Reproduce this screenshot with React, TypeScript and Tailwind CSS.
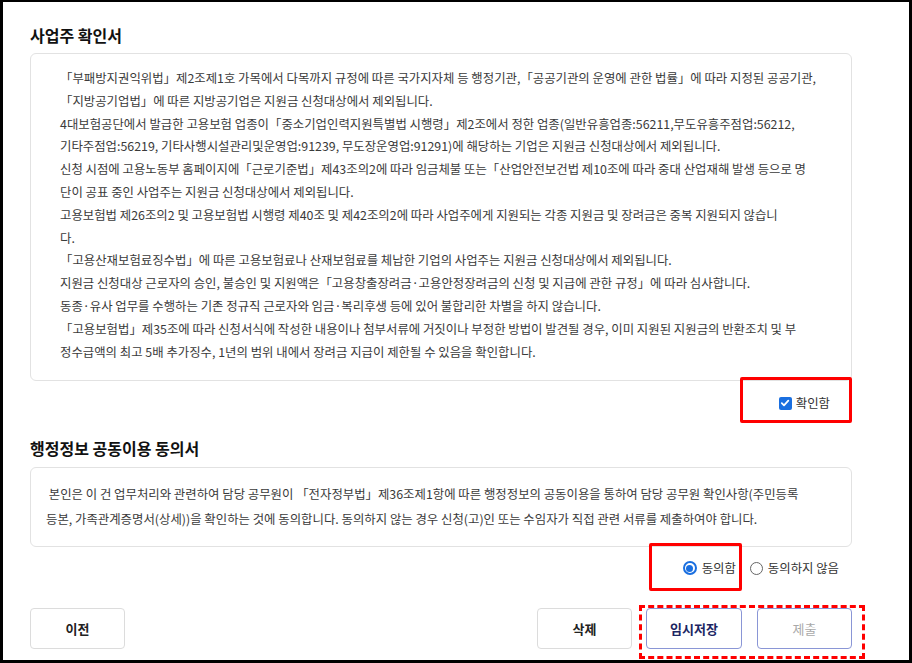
import React from "react";

const box1Lines = [
  "「부패방지권익위법」제2조제1호 가목에서 다목까지 규정에 따른 국가지자체 등 행정기관,「공공기관의 운영에 관한 법률」에 따라 지정된 공공기관,",
  "「지방공기업법」에 따른 지방공기업은 지원금 신청대상에서 제외됩니다.",
  "4대보험공단에서 발급한 고용보험 업종이「중소기업인력지원특별법 시행령」제2조에서 정한 업종(일반유흥업종:56211,무도유흥주점업:56212,",
  "기타주점업:56219, 기타사행시설관리및운영업:91239, 무도장운영업:91291)에 해당하는 기업은 지원금 신청대상에서 제외됩니다.",
  "신청 시점에 고용노동부 홈페이지에「근로기준법」제43조의2에 따라 임금체불 또는「산업안전보건법 제10조에 따라 중대 산업재해 발생 등으로 명",
  "단이 공표 중인 사업주는 지원금 신청대상에서 제외됩니다.",
  "고용보험법 제26조의2 및 고용보험법 시행령 제40조 및 제42조의2에 따라 사업주에게 지원되는 각종 지원금 및 장려금은 중복 지원되지 않습니",
  "다.",
  "「고용산재보험료징수법」에 따른 고용보험료나 산재보험료를 체납한 기업의 사업주는 지원금 신청대상에서 제외됩니다.",
  "지원금 신청대상 근로자의 승인, 불승인 및 지원액은「고용창출장려금·고용안정장려금의 신청 및 지급에 관한 규정」에 따라 심사합니다.",
  "동종·유사 업무를 수행하는 기존 정규직 근로자와 임금·복리후생 등에 있어 불합리한 차별을 하지 않습니다.",
  "「고용보험법」제35조에 따라 신청서식에 작성한 내용이나 첨부서류에 거짓이나 부정한 방법이 발견될 경우, 이미 지원된 지원금의 반환조치 및 부",
  "정수급액의 최고 5배 추가징수, 1년의 범위 내에서 장려금 지급이 제한될 수 있음을 확인합니다.",
];

const font = { fontFamily: '"Noto Sans CJK KR", "Noto Sans", sans-serif' };

export default function App() {
  return (
    <div
      className="relative w-[912px] h-[663px] box-border border-solid border-black border-t-2 border-l-[3px] border-r-[3px] border-b-[3px] bg-white overflow-hidden text-[#333]"
      style={font}
    >
      <div className="pl-[27px] w-[849px] flex flex-col">
        <h2 className="mt-[23px] text-[16px] leading-[21px] font-bold text-[#111]">사업주 확인서</h2>
        <div className="mt-[7px] h-[328px] border border-[#e2e2e2] rounded-[6px] pl-[29px] pt-[13px]">
          {box1Lines.map((l, i) => (
            <div key={i} className="whitespace-nowrap text-[12.4px] leading-[22.8px] text-[#3a3a3a]">
              {l}
            </div>
          ))}
        </div>
        <div className="h-[44px] flex items-center justify-end pr-[22px]">
          <span className="w-[13px] h-[13px] rounded-[2px] bg-[#1a6fe0] flex items-center justify-center">
            <svg width="10" height="10" viewBox="0 0 10 10">
              <path d="M1.8 5.2 L4 7.3 L8.3 2.6" stroke="white" strokeWidth="1.8" fill="none" strokeLinecap="round" strokeLinejoin="round" />
            </svg>
          </span>
          <span className="ml-[4px] text-[12.4px] text-[#333]">확인함</span>
        </div>
        <h2 className="mt-[13px] text-[16px] leading-[21px] font-bold text-[#111]">행정정보 공동이용 동의서</h2>
        <div className="mt-[8px] h-[80px] border border-[#e2e2e2] rounded-[6px] pl-[15px] pt-[14px]">
          <div className="whitespace-nowrap text-[12.4px] leading-[24.5px] text-[#3a3a3a]">
            {"\u00a0본인은 이 건 업무처리와 관련하여 담당 공무원이 「전자정부법」제36조제1항에 따른 행정정보의 공동이용을 통하여 담당 공무원 확인사항(주민등록"}
          </div>
          <div className="whitespace-nowrap text-[12.4px] leading-[24.5px] text-[#3a3a3a]">
            등본, 가족관계증명서(상세))을 확인하는 것에 동의합니다. 동의하지 않는 경우 신청(고)인 또는 수임자가 직접 관련 서류를 제출하여야 합니다.
          </div>
        </div>
        <div className="h-[42px] flex items-center justify-end pr-[13px]">
          <span className="w-[14px] h-[14px] rounded-full border-[2px] border-[#1a6fe0] flex items-center justify-center">
            <span className="w-[7px] h-[7px] rounded-full bg-[#1a6fe0]" />
          </span>
          <span className="ml-[5px] text-[12.4px] text-[#333]">동의함</span>
          <span className="ml-[14px] w-[13px] h-[13px] rounded-full border border-[#666] bg-white" />
          <span className="ml-[5px] text-[12.4px] text-[#333]">동의하지 않음</span>
        </div>
        <div className="mt-[19px] flex items-center">
          <button className="w-[95px] h-[41px] border border-[#dcdcdc] rounded-[4px] bg-white text-[13px] font-bold text-[#222]">이전</button>
          <div className="flex-1" />
          <button className="w-[95px] h-[41px] border border-[#dcdcdc] rounded-[4px] bg-white text-[13px] font-bold text-[#222]">삭제</button>
          <button className="ml-[14px] w-[96px] h-[41px] border border-[#8a96d6] rounded-[4px] bg-white text-[13px] font-bold text-[#1c2663]">임시저장</button>
          <button className="ml-[15px] w-[95px] h-[41px] border border-[#8a96d6] rounded-[4px] bg-white text-[13px] text-[#a9a9a9]">제출</button>
        </div>
      </div>

      {/* annotation overlays */}
      <div className="absolute left-[737px] top-[375px] w-[112px] h-[46px] border-[3px] border-[#ff0000] rounded-[2px]" />
      <div className="absolute left-[646px] top-[541px] w-[93px] h-[48px] border-[3px] border-[#ff0000] rounded-[2px]" />
      <div className="absolute left-[636px] top-[603px] w-[226px] h-[54px] border-[3px] border-dashed border-[#ff0000]" />
    </div>
  );
}
